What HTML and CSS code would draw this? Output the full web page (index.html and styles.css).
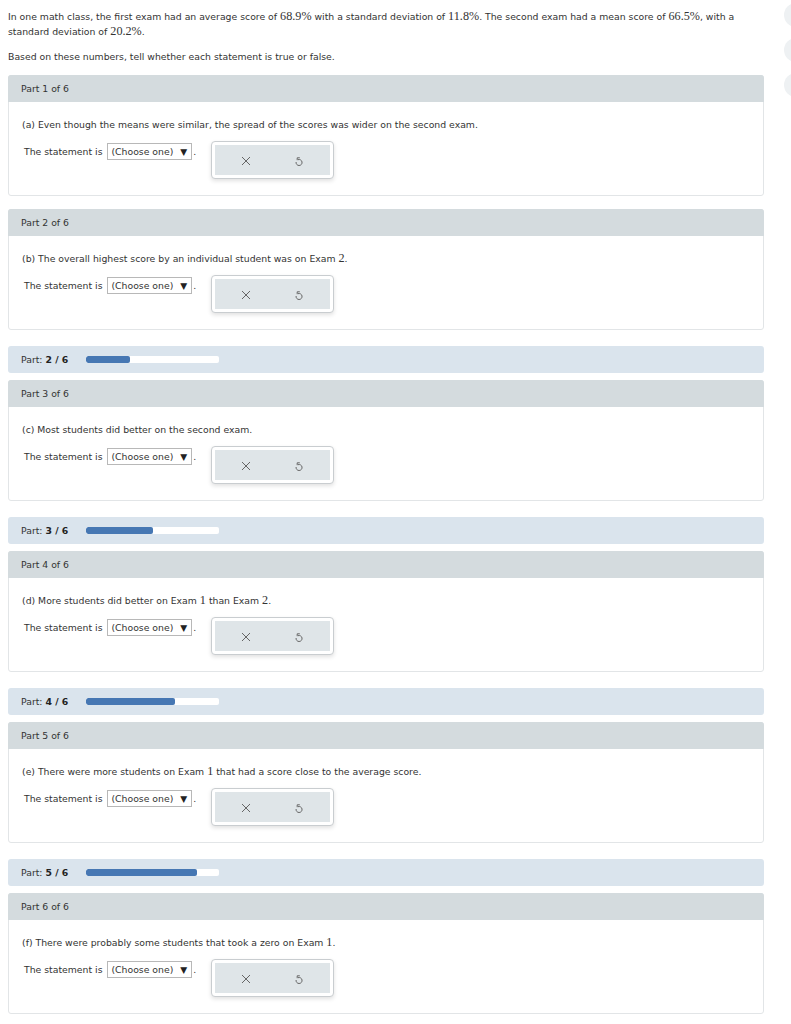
FILE: index.html
```html
<!DOCTYPE html>
<html>
<head>
<meta charset="utf-8">
<link rel="stylesheet" href="styles.css">
</head>
<body>
<div class="side-tools">
  <div class="tool-dot"></div>
  <div class="tool-dot"></div>
  <div class="tool-dot"></div>
</div>
<div class="page">
  <p class="intro">In one math class, the first exam had an average score of <span class="m">68.9%</span> with a standard deviation of <span class="m">11.8%</span>. The second exam had a mean score of <span class="m">66.5%</span>, with a standard deviation of <span class="m">20.2%</span>.</p>
  <p class="lead">Based on these numbers, tell whether each statement is true or false.</p>

  <section class="card">
    <div class="card-head">Part 1 of 6</div>
    <div class="card-body">
      <p class="q">(a) Even though the means were similar, the spread of the scores was wider on the second exam.</p>
      <div class="answer-row">
        <span class="stmt">The statement is <span class="select">(Choose one) <span class="caret">▼</span></span>.</span>
        <div class="tools"><div class="tools-inner">
          <svg class="ico" viewBox="0 0 12 12" width="12" height="12"><path d="M2 2L10 10M10 2L2 10" stroke="#666" stroke-width="1" fill="none"/></svg>
          <svg class="ico" viewBox="0 0 12 12" width="12" height="12"><path d="M5 4.7A3 3 0 1 1 3.1 7M4.2 5.2V2.8H6.8" stroke="#666" stroke-width="1" fill="none"/></svg>
        </div></div>
      </div>
    </div>
  </section>

  <section class="card">
    <div class="card-head">Part 2 of 6</div>
    <div class="card-body">
      <p class="q">(b) The overall highest score by an individual student was on Exam <span class="m">2</span>.</p>
      <div class="answer-row">
        <span class="stmt">The statement is <span class="select">(Choose one) <span class="caret">▼</span></span>.</span>
        <div class="tools"><div class="tools-inner">
          <svg class="ico" viewBox="0 0 12 12" width="12" height="12"><path d="M2 2L10 10M10 2L2 10" stroke="#666" stroke-width="1" fill="none"/></svg>
          <svg class="ico" viewBox="0 0 12 12" width="12" height="12"><path d="M5 4.7A3 3 0 1 1 3.1 7M4.2 5.2V2.8H6.8" stroke="#666" stroke-width="1" fill="none"/></svg>
        </div></div>
      </div>
    </div>
  </section>

  <div class="progress"><span class="plabel">Part: <b>2 / 6</b></span><div class="bar"><div class="fill" style="width:33.3%"></div></div></div>

  <section class="card">
    <div class="card-head">Part 3 of 6</div>
    <div class="card-body">
      <p class="q">(c) Most students did better on the second exam.</p>
      <div class="answer-row">
        <span class="stmt">The statement is <span class="select">(Choose one) <span class="caret">▼</span></span>.</span>
        <div class="tools"><div class="tools-inner">
          <svg class="ico" viewBox="0 0 12 12" width="12" height="12"><path d="M2 2L10 10M10 2L2 10" stroke="#666" stroke-width="1" fill="none"/></svg>
          <svg class="ico" viewBox="0 0 12 12" width="12" height="12"><path d="M5 4.7A3 3 0 1 1 3.1 7M4.2 5.2V2.8H6.8" stroke="#666" stroke-width="1" fill="none"/></svg>
        </div></div>
      </div>
    </div>
  </section>

  <div class="progress"><span class="plabel">Part: <b>3 / 6</b></span><div class="bar"><div class="fill" style="width:50%"></div></div></div>

  <section class="card">
    <div class="card-head">Part 4 of 6</div>
    <div class="card-body">
      <p class="q">(d) More students did better on Exam <span class="m">1</span> than Exam <span class="m">2</span>.</p>
      <div class="answer-row">
        <span class="stmt">The statement is <span class="select">(Choose one) <span class="caret">▼</span></span>.</span>
        <div class="tools"><div class="tools-inner">
          <svg class="ico" viewBox="0 0 12 12" width="12" height="12"><path d="M2 2L10 10M10 2L2 10" stroke="#666" stroke-width="1" fill="none"/></svg>
          <svg class="ico" viewBox="0 0 12 12" width="12" height="12"><path d="M5 4.7A3 3 0 1 1 3.1 7M4.2 5.2V2.8H6.8" stroke="#666" stroke-width="1" fill="none"/></svg>
        </div></div>
      </div>
    </div>
  </section>

  <div class="progress"><span class="plabel">Part: <b>4 / 6</b></span><div class="bar"><div class="fill" style="width:66.7%"></div></div></div>

  <section class="card">
    <div class="card-head">Part 5 of 6</div>
    <div class="card-body">
      <p class="q">(e) There were more students on Exam <span class="m">1</span> that had a score close to the average score.</p>
      <div class="answer-row">
        <span class="stmt">The statement is <span class="select">(Choose one) <span class="caret">▼</span></span>.</span>
        <div class="tools"><div class="tools-inner">
          <svg class="ico" viewBox="0 0 12 12" width="12" height="12"><path d="M2 2L10 10M10 2L2 10" stroke="#666" stroke-width="1" fill="none"/></svg>
          <svg class="ico" viewBox="0 0 12 12" width="12" height="12"><path d="M5 4.7A3 3 0 1 1 3.1 7M4.2 5.2V2.8H6.8" stroke="#666" stroke-width="1" fill="none"/></svg>
        </div></div>
      </div>
    </div>
  </section>

  <div class="progress"><span class="plabel">Part: <b>5 / 6</b></span><div class="bar"><div class="fill" style="width:83.3%"></div></div></div>

  <section class="card">
    <div class="card-head">Part 6 of 6</div>
    <div class="card-body">
      <p class="q">(f) There were probably some students that took a zero on Exam <span class="m">1</span>.</p>
      <div class="answer-row">
        <span class="stmt">The statement is <span class="select">(Choose one) <span class="caret">▼</span></span>.</span>
        <div class="tools"><div class="tools-inner">
          <svg class="ico" viewBox="0 0 12 12" width="12" height="12"><path d="M2 2L10 10M10 2L2 10" stroke="#666" stroke-width="1" fill="none"/></svg>
          <svg class="ico" viewBox="0 0 12 12" width="12" height="12"><path d="M5 4.7A3 3 0 1 1 3.1 7M4.2 5.2V2.8H6.8" stroke="#666" stroke-width="1" fill="none"/></svg>
        </div></div>
      </div>
    </div>
  </section>
</div>
</body>
</html>
```
FILE: styles.css
```css
* { box-sizing: border-box; }
body {
  margin: 0;
  background: #fff;
  font-family: "DejaVu Sans", Verdana, sans-serif;
  font-size: 9.3px;
  color: #333;
  overflow: hidden;
}
.page {
  padding: 9px 27px 0 8px;
}
.m {
  font-family: "Liberation Serif", "Times New Roman", serif;
  font-size: 12.2px;
  line-height: 1;
}
.intro {
  margin: 0;
  line-height: 15px;
}
.lead {
  margin: 10px 0 11px;
  line-height: 15px;
}
.card {
  border: 1px solid #e2e5e7;
  border-radius: 3px;
  margin-bottom: 13px;
  background: #fff;
}
.card-head {
  background: #d4dbde;
  height: 27px;
  padding: 0 13px;
  display: flex;
  align-items: center;
  border-radius: 3px 3px 0 0;
  margin: -1px -1px 0;
}
.card-body {
  padding: 15px 15px 16px 13px;
}
.q {
  margin: 0 0 11px;
  line-height: 15px;
}
.answer-row {
  display: flex;
  align-items: flex-start;
  gap: 15px;
  padding-left: 2px;
}
.stmt {
  display: flex;
  align-items: center;
  white-space: pre;
}
.select {
  display: inline-flex;
  align-items: center;
  height: 17px;
  padding: 0 4px 0 3px;
  border: 1px solid #b8b8b8;
  margin: 0 1px 0 2px;
}
.caret {
  font-size: 9px;
  margin-left: 4px;
  color: #222;
}
.tools {
  width: 123px;
  height: 38px;
  margin-top: -2px;
  border: 1px solid #c9cdd0;
  border-radius: 4px;
  padding: 3px;
  box-shadow: 0 2px 4px rgba(0,0,0,0.12);
  background: #fff;
}
.tools-inner {
  background: #dfe5e8;
  height: 100%;
  display: flex;
  justify-content: space-around;
  align-items: center;
  padding: 2px 4px 0;
}
.ico { display: block; }
.progress {
  background: #dae4ed;
  height: 27px;
  border-radius: 3px;
  display: flex;
  align-items: center;
  padding: 0 13px;
  margin: 16px 0 7px;
}
.plabel { width: 65px; }
.plabel b { font-weight: bold; color: #222; }
.bar {
  width: 133px;
  height: 7px;
  background: #fff;
  border-radius: 2px;
  overflow: hidden;
}
.fill {
  height: 100%;
  background: #4677b3;
  border-radius: 2px;
}
.side-tools {
  position: absolute;
  left: 784px;
  top: 3px;
  display: flex;
  flex-direction: column;
  gap: 11px;
}
.tool-dot {
  width: 24px;
  height: 24px;
  border-radius: 50%;
  background: #eef1f3;
}
```
